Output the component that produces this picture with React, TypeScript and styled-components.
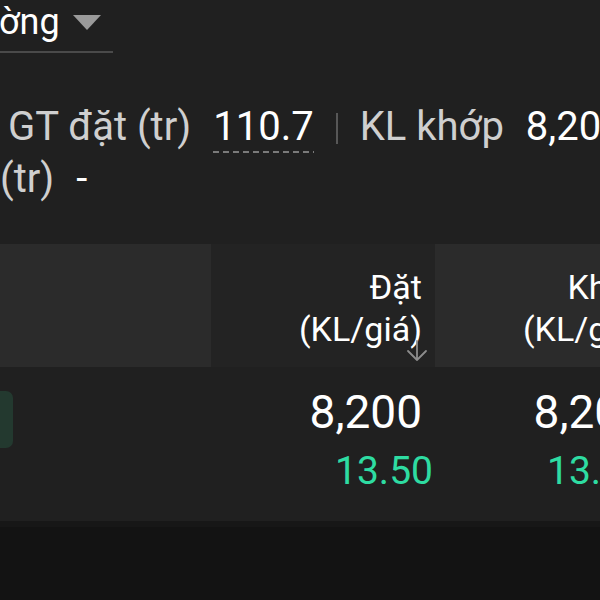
import React from 'react';
import styled, { createGlobalStyle } from 'styled-components';

const GlobalStyle = createGlobalStyle`
  html, body {
    margin: 0;
    padding: 0;
    background: #131313;
  }
  body {
    font-family: Roboto, "Noto Sans", sans-serif;
    overflow: hidden;
  }
`;

const Screen = styled.div`
  width: 600px;
  height: 600px;
  overflow: hidden;
  display: flex;
  flex-direction: column;
`;

const Panel = styled.div`
  background: #202020;
  height: 521px;
  display: flex;
  flex-direction: column;
`;

const OrderTypeSelect = styled.div`
  width: 113px;
  height: 51px;
  border-bottom: 2px solid #4a4a4a;
  display: flex;
  align-items: flex-start;
  gap: 13px;
`;

const SelectText = styled.span`
  font-size: 36px;
  line-height: 40px;
  color: #ffffff;
  margin-top: 2px;
  margin-left: -1px;
`;

const Caret = styled.span`
  margin-top: 15px;
  width: 0;
  height: 0;
  border-left: 14px solid transparent;
  border-right: 14px solid transparent;
  border-top: 15px solid #9a9a9a;
`;

const InfoRow = styled.div<{ $indent: number; $top: number }>`
  display: flex;
  align-items: baseline;
  gap: 22px;
  padding-left: ${({ $indent }) => $indent}px;
  margin-top: ${({ $top }) => $top}px;
  font-size: 40px;
  line-height: 46px;
  white-space: nowrap;
`;

const Label = styled.span`
  color: #cfcfcf;
`;

const Value = styled.span<{ $dashed?: boolean }>`
  color: #ffffff;
  padding-bottom: ${({ $dashed }) => ($dashed ? 3 : 0)}px;
  background-image: ${({ $dashed }) =>
    $dashed ? 'linear-gradient(to right, #7a7a7a 60%, transparent 60%)' : 'none'};
  background-size: 10px 2px;
  background-repeat: repeat-x;
  background-position: left bottom;
`;

const Divider = styled.i`
  display: block;
  align-self: center;
  flex: 0 0 2px;
  width: 2px;
  height: 31px;
  background: #575757;
`;

const Table = styled.div`
  margin-top: auto;
  display: flex;
  flex-direction: column;
`;

const Row = styled.div<{ $height: number }>`
  display: flex;
  height: ${({ $height }) => $height}px;
`;

const HeadCell = styled.div<{ $width: number; $shade: 'light' | 'dark' }>`
  position: relative;
  flex: 0 0 ${({ $width }) => $width}px;
  background: ${({ $shade }) => ($shade === 'light' ? '#2b2b2b' : '#232323')};
  padding: 22px 13px 0 0;
  box-sizing: border-box;
  text-align: right;
  font-size: 34px;
  line-height: 42px;
  color: #ffffff;
  white-space: nowrap;
`;

const SortIcon = styled.svg`
  position: absolute;
  right: 6px;
  bottom: 4px;
`;

const DataCell = styled.div<{ $width: number }>`
  flex: 0 0 ${({ $width }) => $width}px;
  display: flex;
  flex-direction: column;
  align-items: flex-end;
  padding-top: 18px;
  box-sizing: border-box;
  white-space: nowrap;
`;

const SideCell = styled.div<{ $width: number }>`
  flex: 0 0 ${({ $width }) => $width}px;
  padding-top: 24px;
  box-sizing: border-box;
`;

const SideTag = styled.div`
  width: 20px;
  height: 57px;
  margin-left: -7px;
  border-radius: 7px;
  background: #23392f;
`;

const Quantity = styled.span`
  font-size: 46px;
  line-height: 54px;
  color: #ffffff;
  padding-right: 13px;
`;

const Price = styled.span<{ $pad: number }>`
  margin-top: 8px;
  font-size: 39px;
  line-height: 48px;
  color: #2edca2;
  padding-right: ${({ $pad }) => $pad}px;
`;

const BottomBar = styled.div`
  flex: 1;
  background: #131313;
  border-top: 6px solid #171717;
`;

const columns = [
  { title: 'Đặt', qty: '8,200', price: '13.50', pad: 2 },
  { title: 'Khớp', qty: '8,200', price: '13.50', pad: 14 },
];

export default function App() {
  return (
    <Screen>
      <GlobalStyle />
      <Panel>
        <OrderTypeSelect>
          <SelectText>ờng</SelectText>
          <Caret />
        </OrderTypeSelect>

        <InfoRow $indent={8} $top={51}>
          <Label>GT đặt (tr)</Label>
          <Value $dashed>110.7</Value>
          <Divider />
          <Label>KL khớp</Label>
          <Value>8,200</Value>
        </InfoRow>
        <InfoRow $indent={0} $top={3}>
          <Label>(tr)</Label>
          <Value>-</Value>
        </InfoRow>

        <Table>
          <Row $height={123}>
            <HeadCell $width={211} $shade="light" />
            <HeadCell $width={224} $shade="dark">
              {columns[0].title}
              <br />
              (KL/giá)
              <SortIcon width="24" height="24" viewBox="0 0 24 24" fill="none">
                <path
                  d="M12 2v19M3 12l9 9 9-9"
                  stroke="#8c8c8c"
                  strokeWidth="1.8"
                  strokeLinecap="round"
                  strokeLinejoin="round"
                />
              </SortIcon>
            </HeadCell>
            <HeadCell $width={224} $shade="light">
              {columns[1].title}
              <br />
              (KL/giá)
            </HeadCell>
          </Row>
          <Row $height={154}>
            <SideCell $width={211}>
              <SideTag />
            </SideCell>
            {columns.map((c) => (
              <DataCell key={c.title} $width={224}>
                <Quantity>{c.qty}</Quantity>
                <Price $pad={c.pad}>{c.price}</Price>
              </DataCell>
            ))}
          </Row>
        </Table>
      </Panel>
      <BottomBar />
    </Screen>
  );
}
